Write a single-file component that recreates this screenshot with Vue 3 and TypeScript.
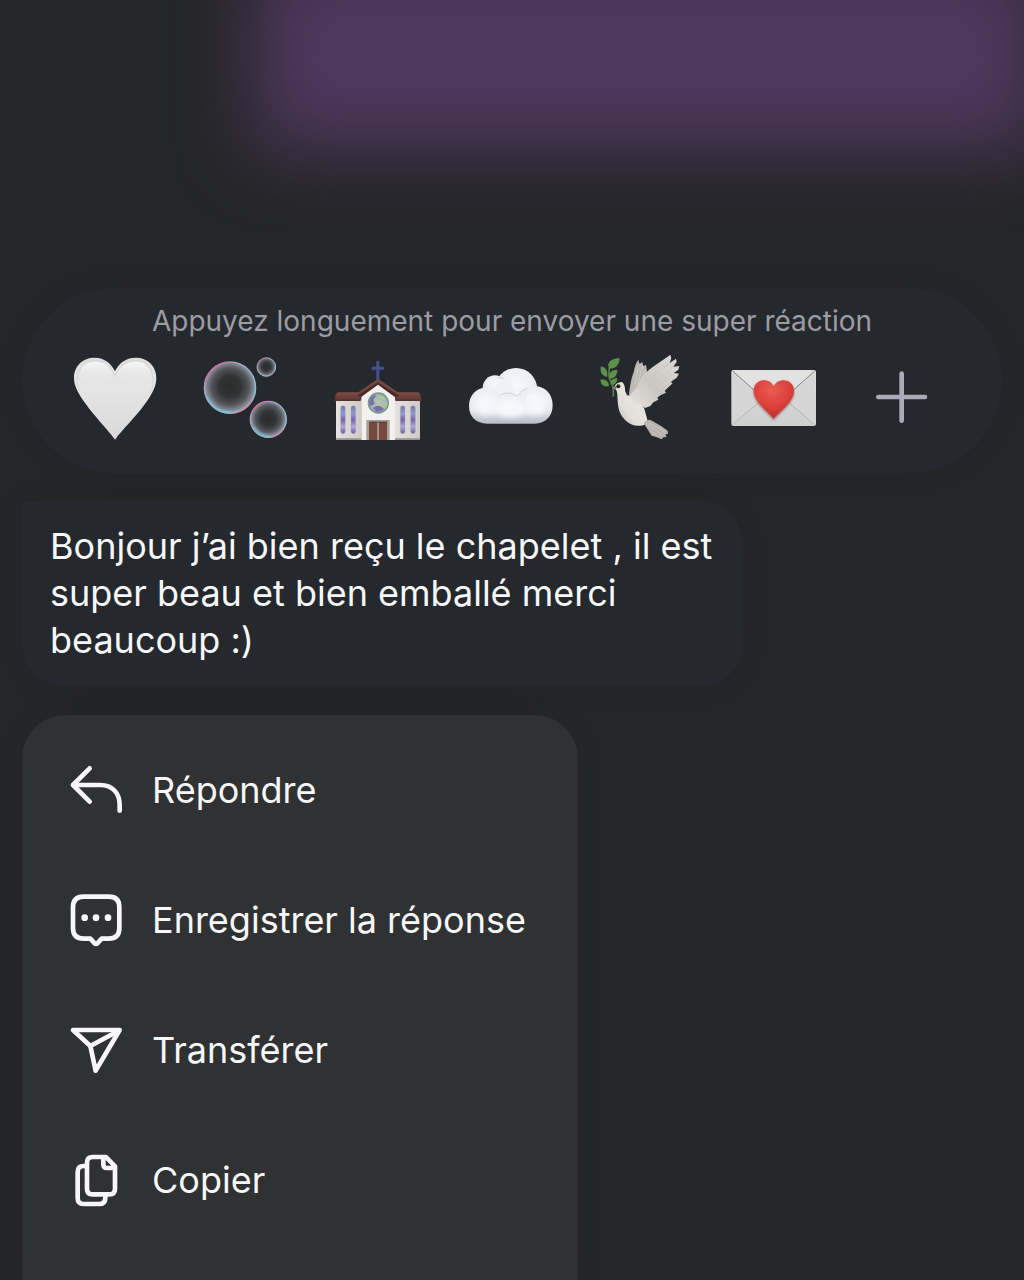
<script setup lang="ts">
interface MenuAction {
  id: string
  label: string
  viewBox: string
  paths: string[]
  dots?: number[]
}

const message = 'Bonjour j’ai bien reçu le chapelet , il est super beau et bien emballé merci beaucoup :)'

const actions: MenuAction[] = [
  {
    id: 'reply',
    label: 'Répondre',
    viewBox: '54 66 168 168',
    paths: ['M119 85L69 135L119 185', 'M70 135H151C187 135 209 159 209 195V212'],
  },
  {
    id: 'save',
    label: 'Enregistrer la réponse',
    viewBox: '54 456 168 168',
    paths: [
      'M101 470H176Q208 470 208 502V564Q208 596 176 596H155L142 610Q138 613 134 610L121 596H101Q69 596 69 564V502Q69 470 101 470Z',
    ],
    dots: [104, 138, 174],
  },
  {
    id: 'forward',
    label: 'Transférer',
    viewBox: '54 67 168 168',
    paths: ['M69 91H209L137 213L121 139Z', 'M121 139L205 94'],
  },
  {
    id: 'copy',
    label: 'Copier',
    viewBox: '54 457 168 168',
    paths: [
      'M128 472H168L195 500V567Q195 584 178 584H128Q111 584 111 567V489Q111 472 128 472Z',
      'M160 473V494Q160 505 171 505H194',
      'M109 499H101Q83 499 83 517V595Q83 613 101 613H147Q166 613 166 594V586',
    ],
  },
]
</script>

<template>
  <main class="screen">
    <div class="backdrop" aria-hidden="true"></div>

    <section class="reactions" aria-label="Réactions">
      <p class="hint">Appuyez longuement pour envoyer une super réaction</p>
      <div class="emoji-row">
        <button type="button" class="emoji" aria-label="Cœur blanc">
          <svg viewBox="33 27 264 264">
            <defs>
              <linearGradient id="heartFill" x1="0" y1="0" x2="0" y2="1">
                <stop offset="0" stop-color="#dedede" />
                <stop offset="0.35" stop-color="#e6e6e6" />
                <stop offset="1" stop-color="#d8d8d8" />
              </linearGradient>
              <linearGradient id="heartShine" x1="0" y1="0" x2="0" y2="1">
                <stop offset="0" stop-color="#f8f8f8" />
                <stop offset="1" stop-color="#e6e6e6" stop-opacity="0" />
              </linearGradient>
            </defs>
            <path fill="url(#heartFill)" d="M165 284C142 253 104 215 78 178C56 148 42 124 42 99C42 62 69 38 104 38C134 38 155 57 165 79C175 57 196 38 227 38C262 38 289 62 289 99C289 124 276 148 254 178C228 215 188 253 165 284Z" />
            <path fill="none" stroke="#d0d0d0" stroke-width="2" d="M58 138C44 104 53 47 104 46C136 46 157 69 165 92C173 69 194 46 227 46C278 47 287 104 273 138" />
            <path fill="url(#heartShine)" d="M56 100C58 65 78 50 105 50C135 50 153 68 160 93Q150 118 110 120Q70 120 56 100ZM170 93C177 68 198 50 227 50C255 50 274 67 275 100Q262 120 222 120Q180 118 170 93Z" />
          </svg>
        </button>

        <button type="button" class="emoji" aria-label="Bulles">
          <svg viewBox="426 27 264 264">
            <defs>
              <radialGradient id="bubbleFill" cx="0.5" cy="0.48" r="0.52">
                <stop offset="0" stop-color="#2b2b2c" />
                <stop offset="0.4" stop-color="#323334" />
                <stop offset="0.7" stop-color="#53565a" />
                <stop offset="0.9" stop-color="#838c96" />
                <stop offset="1" stop-color="#a8b8c5" />
              </radialGradient>
              <linearGradient id="bubbleRim" x1="0.15" y1="0.1" x2="0.8" y2="1">
                <stop offset="0" stop-color="#c96c97" />
                <stop offset="0.22" stop-color="#aaa3bd" />
                <stop offset="0.55" stop-color="#91b7d0" />
                <stop offset="0.8" stop-color="#85c5da" />
                <stop offset="1" stop-color="#d984a0" />
              </linearGradient>
            </defs>
            <g fill="url(#bubbleFill)" stroke="url(#bubbleRim)">
              <circle cx="510" cy="128" r="77" stroke-width="4" />
              <circle cx="619" cy="66" r="28" stroke-width="3" />
              <circle cx="625" cy="223" r="54" stroke-width="4" />
            </g>
            <g fill="none" stroke-linecap="round" opacity="0.5">
              <path stroke="#dc7594" stroke-width="4" d="M445 94Q458 67 483 58M584 191Q591 181 599 176M535 200Q559 192 572 174M640 273Q656 267 665 257" />
              <path stroke="#74c4df" stroke-width="5" d="M444 158Q467 200 512 200M583 247Q601 272 625 272" />
            </g>
          </svg>
        </button>

        <button type="button" class="emoji" aria-label="Église">
          <svg viewBox="39 27 264 264">
            <defs>
              <linearGradient id="roofFill" x1="0" y1="0" x2="0" y2="1">
                <stop offset="0" stop-color="#804b44" />
                <stop offset="1" stop-color="#56302d" />
              </linearGradient>
              <linearGradient id="wallFill" x1="0" y1="0" x2="1" y2="0">
                <stop offset="0" stop-color="#e5e2df" />
                <stop offset="1" stop-color="#cfcac7" />
              </linearGradient>
              <linearGradient id="glassFill" x1="0" y1="0" x2="0" y2="1">
                <stop offset="0" stop-color="#7770ae" />
                <stop offset="0.3" stop-color="#8f9dcc" />
                <stop offset="0.5" stop-color="#7663ae" />
                <stop offset="0.75" stop-color="#aaa9d6" />
                <stop offset="1" stop-color="#6f57a8" />
              </linearGradient>
            </defs>
            <path fill="#445090" d="M169 48H178V65H192V74H178V108H169V74H155V65H169Z" />
            <rect x="48" y="164" width="77" height="120" fill="url(#wallFill)" />
            <rect x="223" y="164" width="77" height="120" fill="url(#wallFill)" />
            <path fill="#979391" d="M48 280H125V284H48ZM223 280H300V284H223Z" />
            <path fill="url(#roofFill)" d="M53 142H122V168H43L47 148ZM226 142H295L301 148L305 168H226Z" />
            <path stroke="#8d5a51" stroke-width="1" d="M52 149H119M49 158H119M229 149H298M229 158H301" />
            <path fill="#f3f1ef" d="M124 151L174 109L225 151V285H124Z" />
            <path fill="#744841" d="M174 101L236 143V155H224L174 118L124 155H113V143Z" />
            <path fill="#4c2c2a" d="M113 151L174 112L236 151V155H224L174 119L124 155H113Z" />
            <circle cx="175" cy="174" r="32" fill="#79968f" />
            <circle cx="175" cy="174" r="27" fill="#a2b9bd" />
            <path fill="#7771a8" d="M151 160Q159 149 169 151L160 164L164 177L150 184Q145 171 151 160ZM158 189L174 181L194 190Q184 202 169 200Z" />
            <path fill="#a9c59b" d="M171 151Q190 147 197 162L181 168ZM184 170L203 174Q201 188 193 193L180 181Z" />
            <path fill="#b4c2b4" d="M166 165H185V183H166Z" />
            <g fill="url(#glassFill)" stroke="#a9a6ad" stroke-width="1">
              <rect x="62" y="182" width="14" height="84" rx="7" />
              <rect x="93" y="182" width="14" height="84" rx="7" />
              <rect x="241" y="182" width="14" height="84" rx="7" />
              <rect x="272" y="182" width="14" height="84" rx="7" />
            </g>
            <path fill="#a6a09b" d="M139 225H209V285H139Z" />
            <path fill="#774940" d="M147 231H173V285H147ZM176 231H201V285H176Z" />
            <path stroke="#472b29" stroke-width="2" d="M147 231H201" />
            <path stroke="#b9aca6" stroke-width="3" d="M174 232V285" />
          </svg>
        </button>

        <button type="button" class="emoji" aria-label="Nuage">
          <svg viewBox="432 27 264 264">
            <defs>
              <radialGradient id="puffFill" cx="0.5" cy="0.4" r="0.62">
                <stop offset="0" stop-color="#f8f9fc" />
                <stop offset="0.65" stop-color="#ebeef2" />
                <stop offset="1" stop-color="#cdd1d8" />
              </radialGradient>
              <linearGradient id="cloudBase" x1="0" y1="0" x2="0" y2="1">
                <stop offset="0" stop-color="#edf0f4" />
                <stop offset="0.65" stop-color="#e5e9ef" />
                <stop offset="1" stop-color="#b4bac3" />
              </linearGradient>
              <radialGradient id="cloudGlow">
                <stop offset="0" stop-color="#f8f9fb" />
                <stop offset="0.5" stop-color="#f4f6f9" />
                <stop offset="1" stop-color="#eceff3" stop-opacity="0" />
              </radialGradient>
            </defs>
            <circle cx="588" cy="133" r="64" fill="url(#puffFill)" />
            <circle cx="525" cy="128" r="37" fill="url(#puffFill)" />
            <path fill="#eef1f5" d="M540 104Q568 96 590 142L552 182L515 146Z" />
            <path fill="url(#cloudBase)" d="M500 128C467 128 447 151 447 184C447 216 470 236 501 236H644C676 236 698 214 698 181C698 147 675 124 646 124C616 124 600 138 592 153C577 137 551 139 540 151C532 136 517 128 500 128Z" />
            <ellipse cx="500" cy="176" rx="52" ry="46" fill="url(#cloudGlow)" />
            <ellipse cx="645" cy="174" rx="52" ry="48" fill="url(#cloudGlow)" />
            <ellipse cx="570" cy="186" rx="72" ry="42" fill="url(#cloudGlow)" />
            <path fill="none" stroke="#cfd4dc" stroke-width="3" d="M540 151Q560 136 592 153Q602 137 622 129M532 99Q544 93 553 103" />
          </svg>
        </button>

        <button type="button" class="emoji" aria-label="Colombe">
          <svg viewBox="15 27 264 264">
            <defs>
              <linearGradient id="wingFill" x1="1" y1="0" x2="0.1" y2="1">
                <stop offset="0" stop-color="#dedbd8" />
                <stop offset="0.6" stop-color="#cbc8c4" />
                <stop offset="1" stop-color="#e3e1dd" />
              </linearGradient>
              <linearGradient id="bodyFill" x1="1" y1="0" x2="0" y2="1">
                <stop offset="0" stop-color="#eeece8" />
                <stop offset="0.65" stop-color="#e2dfda" />
                <stop offset="1" stop-color="#b4b0aa" />
              </linearGradient>
            </defs>
            <path fill="#bdbab6" d="M117 151C119 122 126 94 132 78C134 63 139 53 145 44L148 56L157 52L160 63L168 60L171 77L164 106L142 147Z" />
            <path fill="url(#bodyFill)" d="M96 111Q106 119 105 137L111 151L137 154L163 191L173 228Q167 243 148 242C121 244 102 226 92 207C80 184 85 156 80 137L73 126Q77 113 96 111Z" />
            <path fill="url(#wingFill)" d="M118 153C137 136 147 111 160 91C180 67 214 50 241 29L244 40L239 54L258 41L260 51L250 65L268 63L265 74L251 84L267 86L260 98L242 111L248 115L236 126L224 137L228 143L211 151L202 158L205 164L190 172L181 183L165 189L151 180L132 176Z" />
            <path fill="none" stroke="#b9b5b0" stroke-width="1" d="M238 54L184 99M250 65L193 113M251 84L200 127M242 111L192 151L173 178M224 137L190 164" />
            <path fill="none" stroke="#d6d3cf" stroke-width="2" d="M145 64L135 120M157 62L144 118M167 74L151 112" />
            <path fill="#b8b3ae" d="M161 234Q174 220 183 226L212 242L233 257L234 267L226 268L230 276L220 277L215 283L199 276L185 272L174 255Z" />
            <path fill="none" stroke="#d1cdc8" stroke-width="2" d="M171 236L219 271M176 234L224 258M168 240L204 275" />
            <path fill="none" stroke="#568047" stroke-width="5" stroke-linecap="round" d="M58 70C56 84 55 94 60 105Q72 120 70 153" />
            <g fill="#5b9148">
              <path d="M57 71C48 47 70 41 89 39C89 55 80 72 57 71Z" />
              <path d="M51 96C31 91 30 77 33 64C51 68 54 81 51 96Z" />
              <path d="M58 101C54 81 66 75 82 74C82 91 74 101 58 101Z" />
              <path d="M57 123C41 128 32 117 31 104C49 102 56 110 57 123Z" />
              <path d="M62 119C59 104 71 100 81 99C83 114 73 121 62 119Z" />
            </g>
            <path fill="#7e766d" d="M76 122L66 128L76 135L80 128Z" />
            <circle cx="85" cy="124" r="6" fill="#191817" />
            <circle cx="87" cy="122" r="1" fill="#ffffff" />
          </svg>
        </button>

        <button type="button" class="emoji" aria-label="Lettre d’amour">
          <svg viewBox="408 27 264 264">
            <defs>
              <linearGradient id="paperFill" x1="0" y1="0" x2="0" y2="1">
                <stop offset="0" stop-color="#dfdfdf" />
                <stop offset="1" stop-color="#cecece" />
              </linearGradient>
              <radialGradient id="redFill" cx="0.45" cy="0.25" r="0.75">
                <stop offset="0" stop-color="#ea5c50" />
                <stop offset="0.6" stop-color="#dc4039" />
                <stop offset="1" stop-color="#b92f2b" />
              </radialGradient>
              <filter id="heartShadow" x="-0.2" y="-0.2" width="1.4" height="1.5">
                <feDropShadow dx="0" dy="4" stdDeviation="3" flood-color="#551b19" flood-opacity="0.55" />
              </filter>
            </defs>
            <rect x="424" y="75" width="254" height="168" rx="6" fill="url(#paperFill)" />
            <path fill="#d6d6d6" d="M427 78L524 160L427 240ZM675 78L578 160L675 240Z" />
            <path fill="none" stroke="#b2b2b2" stroke-width="3" d="M428 239L523 158M674 239L579 158" />
            <path fill="#e2e2e2" d="M429 77H673L569 172Q551 187 533 172Z" />
            <path fill="none" stroke="#858585" stroke-width="3" d="M429 79L533 172Q551 187 569 172L673 79" />
            <path fill="url(#redFill)" filter="url(#heartShadow)" d="M551 221C534 200 491 170 491 138C491 119 504 106 522 106C536 106 546 113 551 124C557 113 567 106 581 106C599 106 612 119 612 138C612 170 568 200 551 221Z" />
          </svg>
        </button>

        <button type="button" class="emoji" aria-label="Ajouter une réaction">
          <svg viewBox="21 27 264 264">
            <path fill="none" stroke="#aaabb8" stroke-width="14" stroke-linecap="round" d="M155 86V227M85 156H225" />
          </svg>
        </button>
      </div>
    </section>

    <p class="bubble">{{ message }}</p>

    <nav class="menu" aria-label="Actions du message">
      <button v-for="action in actions" :key="action.id" type="button" class="menu-item">
        <svg class="menu-icon" :viewBox="action.viewBox" aria-hidden="true">
          <path v-for="path in action.paths" :key="path" :d="path" />
          <circle v-for="x in action.dots" :key="x" :cx="x" cy="533" r="10" />
        </svg>
        <span>{{ action.label }}</span>
      </button>
    </nav>
  </main>
</template>

<style>
body {
  margin: 0;
  background: #252628;
}
</style>

<style scoped>
.screen {
  position: relative;
  box-sizing: border-box;
  min-height: 100vh;
  padding: 288px 22px 0;
  display: flex;
  flex-direction: column;
  align-items: flex-start;
  gap: 28px;
  overflow: hidden;
  background: #252628;
  color: #f7f7f9;
  font-family: Inter, "Liberation Sans", sans-serif;
}

.backdrop {
  position: absolute;
  top: -48px;
  left: 25%;
  right: -16px;
  height: 196px;
  background: #4f385e;
  filter: blur(38px);
}

.reactions {
  position: relative;
  align-self: stretch;
  box-sizing: border-box;
  padding: 16px 0 31px;
  border-radius: 92px;
  background: #25282d;
  box-shadow: 0 0 24px rgba(34, 34, 34, 0.3);
}

.hint {
  margin: 0 0 16px;
  color: #9b9da3;
  font-size: 28px;
  line-height: 34px;
  text-align: center;
  white-space: nowrap;
}

.emoji-row {
  display: flex;
  justify-content: space-between;
  padding: 0 57px 0 49px;
}

.emoji {
  width: 88px;
  height: 88px;
  padding: 0;
  border: 0;
  background: none;
}

.emoji svg {
  display: block;
  width: 100%;
  height: 100%;
  overflow: visible;
}

.bubble {
  position: relative;
  box-sizing: border-box;
  width: 721px;
  max-width: 100%;
  margin: 0;
  padding: 22px 24px 23px 28px;
  border-radius: 6px 44px 44px 44px;
  background: #25282d;
  box-shadow: 0 0 24px rgba(34, 34, 34, 0.3);
  font-size: 36px;
  line-height: 47px;
}

.menu {
  position: relative;
  flex: 1;
  box-sizing: border-box;
  width: 556px;
  max-width: 100%;
  padding-top: 10px;
  border-radius: 44px 44px 0 0;
  background: #303132;
  box-shadow: 0 0 24px rgba(34, 34, 34, 0.3);
}

.menu-item {
  display: flex;
  align-items: center;
  gap: 28px;
  width: 100%;
  height: 130px;
  padding: 0 46px;
  border: 0;
  background: none;
  color: inherit;
  font: inherit;
  font-size: 36px;
  line-height: 47px;
  text-align: left;
  white-space: nowrap;
}

.menu-icon {
  flex: none;
  width: 56px;
  height: 56px;
  fill: none;
  stroke: #f7f7f9;
  stroke-width: 14;
  stroke-linecap: round;
  stroke-linejoin: round;
}

.menu-icon circle {
  fill: #f7f7f9;
  stroke: none;
}
</style>
